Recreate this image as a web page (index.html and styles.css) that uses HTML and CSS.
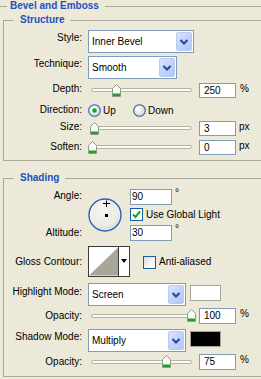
FILE: index.html
```html
<!DOCTYPE html>
<html>
<head>
<meta charset="utf-8">
<link rel="stylesheet" href="styles.css">
</head>
<body>
<div class="title"><span class="ln ln-a"></span><span class="ttl">Bevel and Emboss</span><span class="ln ln-b"></span></div>

<div class="group g-struct">
  <div class="legend">Structure</div>

  <div class="row r-style">
    <div class="lbl pt2">Style:</div>
    <div class="sel w106"><span class="sel-t">Inner Bevel</span><span class="sel-b"><svg width="14" height="17" viewBox="0 0 14 17"><path d="M3.5 7 L7 10.5 L10.5 7" fill="none" stroke="#23479e" stroke-width="2"/></svg></span></div>
  </div>

  <div class="row r-tech">
    <div class="lbl pt2">Technique:</div>
    <div class="sel w89"><span class="sel-t">Smooth</span><span class="sel-b"><svg width="14" height="17" viewBox="0 0 14 17"><path d="M3.5 7 L7 10.5 L10.5 7" fill="none" stroke="#23479e" stroke-width="2"/></svg></span></div>
  </div>

  <div class="row r-depth">
    <div class="lbl">Depth:</div>
    <div class="slider"><div class="track"></div><svg class="thumb" style="left:24px" width="9" height="13" viewBox="0 0 9 13"><path d="M0.5 4.5 L4.5 0.5 L8.5 4.5 V12.5 H0.5 Z" fill="#fafaf6" stroke="#8c9a8c"/><rect x="1" y="9.5" width="7" height="2.5" fill="#22a022"/></svg></div>
    <div class="inp">250</div><div class="unit">%</div>
  </div>

  <div class="row r-dir">
    <div class="lbl">Direction:</div>
    <div class="opt o-up"><svg width="13" height="13" viewBox="0 0 13 13"><defs><radialGradient id="rg1" cx="0.35" cy="0.35" r="0.7"><stop offset="0" stop-color="#ffffff"/><stop offset="1" stop-color="#dcdcd4"/></radialGradient></defs><circle cx="6.5" cy="6.5" r="5.8" fill="url(#rg1)" stroke="#2b5bb0" stroke-width="1.1"/><circle cx="6.5" cy="6.5" r="2.3" fill="#22a022"/></svg><span class="opt-t">Up</span></div>
    <div class="opt"><svg width="13" height="13" viewBox="0 0 13 13"><defs><radialGradient id="rg2" cx="0.35" cy="0.35" r="0.7"><stop offset="0" stop-color="#ffffff"/><stop offset="1" stop-color="#d6d6ce"/></radialGradient></defs><circle cx="6.5" cy="6.5" r="5.8" fill="url(#rg2)" stroke="#2b5bb0" stroke-width="1.1"/></svg><span class="opt-t">Down</span></div>
  </div>

  <div class="row r-size">
    <div class="lbl">Size:</div>
    <div class="slider"><div class="track"></div><svg class="thumb" style="left:2px" width="9" height="13" viewBox="0 0 9 13"><path d="M0.5 4.5 L4.5 0.5 L8.5 4.5 V12.5 H0.5 Z" fill="#fafaf6" stroke="#8c9a8c"/><rect x="1" y="9.5" width="7" height="2.5" fill="#22a022"/></svg></div>
    <div class="inp">3</div><div class="unit px">px</div>
  </div>

  <div class="row r-soft">
    <div class="lbl pt1">Soften:</div>
    <div class="slider"><div class="track"></div><svg class="thumb" style="left:0px" width="9" height="13" viewBox="0 0 9 13"><path d="M0.5 4.5 L4.5 0.5 L8.5 4.5 V12.5 H0.5 Z" fill="#fafaf6" stroke="#8c9a8c"/><rect x="1" y="9.5" width="7" height="2.5" fill="#22a022"/></svg></div>
    <div class="inp">0</div><div class="unit px">px</div>
  </div>
</div>

<div class="group g-shade">
  <div class="legend">Shading</div>

  <div class="angle">
    <div class="lbl a-l1">Angle:</div>
    <div class="dial"><svg width="34" height="34" viewBox="0 0 34 34"><defs><radialGradient id="dg" cx="0.45" cy="0.4" r="0.6"><stop offset="0" stop-color="#f6f6f2"/><stop offset="0.75" stop-color="#ecebe4"/><stop offset="1" stop-color="#cfcec6"/></radialGradient></defs><circle cx="17" cy="17" r="16" fill="url(#dg)" stroke="#2e5cc0" stroke-width="1.4"/><circle cx="17" cy="17" r="14.6" fill="none" stroke="#ffffff" stroke-width="0.8" opacity="0.7"/><path d="M18.5 2.5 V9 M15 5.5 H22" stroke="#000" stroke-width="1"/><rect x="17" y="16" width="3" height="3" fill="#000"/></svg></div>
    <div class="a-c1"><div class="inp w42">90</div><div class="unit deg">°</div></div>
    <div class="a-c2"><svg width="13" height="13" viewBox="0 0 13 13"><rect x="0.5" y="0.5" width="12" height="12" fill="#f8f8f4" stroke="#1c5aa8"/><path d="M3 6.5 L5.5 9 L10 3.5" fill="none" stroke="#22a022" stroke-width="2"/></svg><span class="cb-t">Use Global Light</span></div>
    <div class="lbl a-l3">Altitude:</div>
    <div class="a-c3"><div class="inp w42">30</div><div class="unit deg">°</div></div>
  </div>

  <div class="row r-gloss">
    <div class="lbl pt10">Gloss Contour:</div>
    <div class="contour"><svg width="30" height="29" viewBox="0 0 30 29"><rect width="30" height="29" fill="#fff"/><path d="M0 29 L30 0 V29 Z" fill="#a8a698"/></svg><span class="c-arr"><svg width="10" height="29" viewBox="0 0 10 29"><path d="M2 12 H8 L5 16 Z" fill="#000"/></svg></span></div>
    <div class="aa"><svg width="13" height="13" viewBox="0 0 13 13"><defs><linearGradient id="cg" x1="0" y1="0" x2="1" y2="1"><stop offset="0" stop-color="#dcdcd4"/><stop offset="0.55" stop-color="#f4f4f0"/><stop offset="1" stop-color="#ffffff"/></linearGradient></defs><rect x="0.5" y="0.5" width="12" height="12" fill="url(#cg)" stroke="#1c5aa8"/></svg><span class="cb-t">Anti-aliased</span></div>
  </div>

  <div class="row r-hl">
    <div class="lbl pt3">Highlight Mode:</div>
    <div class="sel w98"><span class="sel-t">Screen</span><span class="sel-b"><svg width="14" height="17" viewBox="0 0 14 17"><path d="M3.5 7 L7 10.5 L10.5 7" fill="none" stroke="#23479e" stroke-width="2"/></svg></span></div>
    <div class="swatch sw-w"></div>
  </div>

  <div class="row r-op1">
    <div class="lbl pt2">Opacity:</div>
    <div class="slider"><div class="track"></div><svg class="thumb" style="left:99px" width="9" height="13" viewBox="0 0 9 13"><path d="M0.5 4.5 L4.5 0.5 L8.5 4.5 V12.5 H0.5 Z" fill="#fafaf6" stroke="#8c9a8c"/><rect x="1" y="9.5" width="7" height="2.5" fill="#22a022"/></svg></div>
    <div class="inp">100</div><div class="unit">%</div>
  </div>

  <div class="row r-sh">
    <div class="lbl pt2">Shadow Mode:</div>
    <div class="sel w98"><span class="sel-t">Multiply</span><span class="sel-b"><svg width="14" height="17" viewBox="0 0 14 17"><path d="M3.5 7 L7 10.5 L10.5 7" fill="none" stroke="#23479e" stroke-width="2"/></svg></span></div>
    <div class="swatch sw-b"></div>
  </div>

  <div class="row r-op2">
    <div class="lbl pt2">Opacity:</div>
    <div class="slider"><div class="track"></div><svg class="thumb" style="left:74px" width="9" height="13" viewBox="0 0 9 13"><path d="M0.5 4.5 L4.5 0.5 L8.5 4.5 V12.5 H0.5 Z" fill="#fafaf6" stroke="#8c9a8c"/><rect x="1" y="9.5" width="7" height="2.5" fill="#22a022"/></svg></div>
    <div class="inp">75</div><div class="unit">%</div>
  </div>
</div>
</body>
</html>
```

FILE: styles.css
```css
* { box-sizing: border-box; }
html, body { margin: 0; padding: 0; }
body {
  background: #ece9d8;
  font-family: "Liberation Sans", Arial, sans-serif;
  font-size: 10px;
  line-height: 12px;
  color: #000;
  width: 261px;
  height: 379px;
  overflow: hidden;
}
.title { display: flex; align-items: center; height: 12px; }
.ln { height: 1px; background: #aca899; }
.ln-a { width: 7px; flex: none; }
.ttl { margin: 0 6px 0 3px; font-weight: bold; color: #1f4fbf; white-space: nowrap; }
.ln-b { flex: 1; }

.group {
  border: 1px solid #aca899;
  margin: 0 -4px 0 3px;
}
.g-struct { margin-top: 8px; padding-bottom: 5px; }
.g-shade { margin-top: 17px; padding-bottom: 6px; }
.legend {
  display: table;
  margin: -7px 0 0 10px;
  padding: 0 6px;
  background: #ece9d8;
  font-weight: bold;
  color: #1f4fbf;
  line-height: 12px;
}

.row { display: flex; align-items: flex-start; }
.lbl { width: 78px; flex: none; margin-right: 6px; text-align: right; white-space: nowrap; }
.pt1 { padding-top: 1px; }
.pt2 { padding-top: 2px; }
.pt3 { padding-top: 3px; }
.pt10 { padding-top: 10px; }

.r-style { margin-top: 4px; height: 23px; }
.r-tech { margin-top: 3px; height: 23px; }
.r-depth { margin-top: 4px; height: 15px; }
.r-dir { margin-top: 6px; height: 13px; }
.r-size { margin-top: 4px; height: 15px; }
.r-soft { margin-top: 4px; height: 15px; }

.sel {
  display: flex;
  height: 23px;
  background: #fff;
  border: 1px solid #7f9db9;
  flex: none;
}
.w106 { width: 106px; }
.w89 { width: 89px; }
.w98 { width: 98px; }
.sel-t { padding: 5px 0 0 3px; line-height: 12px; white-space: nowrap; }
.sel-b {
  margin: 1px 1px 0 auto;
  width: 16px;
  height: 19px;
  border: 1px solid #b9cbf3;
  border-radius: 2px;
  background: linear-gradient(135deg, #dce6fd 0%, #c3d4fa 45%, #b2c7f6 100%);
  display: flex;
  align-items: center;
  justify-content: center;
}

.slider { position: relative; width: 108px; height: 15px; flex: none; }
.track {
  margin: 5px 0 0 3px;
  width: 101px;
  height: 4px;
  border: 1px solid #b4b3a6;
  border-radius: 2px;
  background: #fbfbf8;
}
.thumb { position: absolute; top: 1px; }

.inp {
  flex: none;
  width: 37px;
  height: 15px;
  margin-left: 3px;
  border: 1px solid #7f9db9;
  background: #fff;
  padding-left: 4px;
  line-height: 13px;
}
.w42 { width: 42px; margin-left: 0; height: 16px; line-height: 14px; padding-left: 1px; }
.unit { margin-left: 4px; }
.unit.px { margin-left: 3px; }
.unit.deg { margin-left: 3px; margin-top: -2px; }

.opt { display: flex; align-items: center; height: 13px; }
.o-up { width: 45px; }
.opt-t { margin-left: 2px; }

.angle {
  display: grid;
  grid-template-columns: 78px 36px auto;
  grid-template-rows: 16px 3px 13px 4px 16px;
  column-gap: 6px;
  margin-top: 5px;
}
.a-l1 { grid-column: 1; grid-row: 1; padding-top: 1px; }
.a-l3 { grid-column: 1; grid-row: 5; padding-top: 2px; }
.dial { grid-column: 2; grid-row: 1 / 6; margin-top: 9px; width: 34px; height: 34px; }
.dial svg { display: block; }
.a-c1 { grid-column: 3; grid-row: 1; display: flex; }
.a-c2 { grid-column: 3; grid-row: 3; display: flex; align-items: center; }
.a-c3 { grid-column: 3; grid-row: 5; display: flex; }
.cb-t { margin-left: 3px; white-space: nowrap; }
.a-c2 svg, .aa svg { display: block; flex: none; }

.r-gloss { margin-top: 5px; height: 31px; }
.contour {
  flex: none;
  display: flex;
  width: 42px;
  height: 31px;
  border: 1px solid #3c3c3c;
  background: #fff;
}
.contour svg { display: block; }
.c-arr { border-left: 1px solid #3c3c3c; width: 11px; display: flex; justify-content: center; }
.aa { display: flex; align-items: center; margin: 10px 0 0 13px; height: 12px; }

.r-hl { margin-top: 6px; height: 23px; }
.r-op1 { margin-top: 2px; height: 16px; }
.r-sh { margin-top: 5px; height: 23px; }
.r-op2 { margin-top: 2px; height: 16px; }
.r-op1 .inp, .r-op2 .inp { height: 16px; line-height: 14px; }
.r-op1 .track, .r-op2 .track { margin-top: 6px; }

.swatch { flex: none; width: 31px; height: 16px; margin: 2px 0 0 4px; border: 1px solid #a5a497; }
.sw-w { background: #fff; }
.sw-b { background: #000; }
```
